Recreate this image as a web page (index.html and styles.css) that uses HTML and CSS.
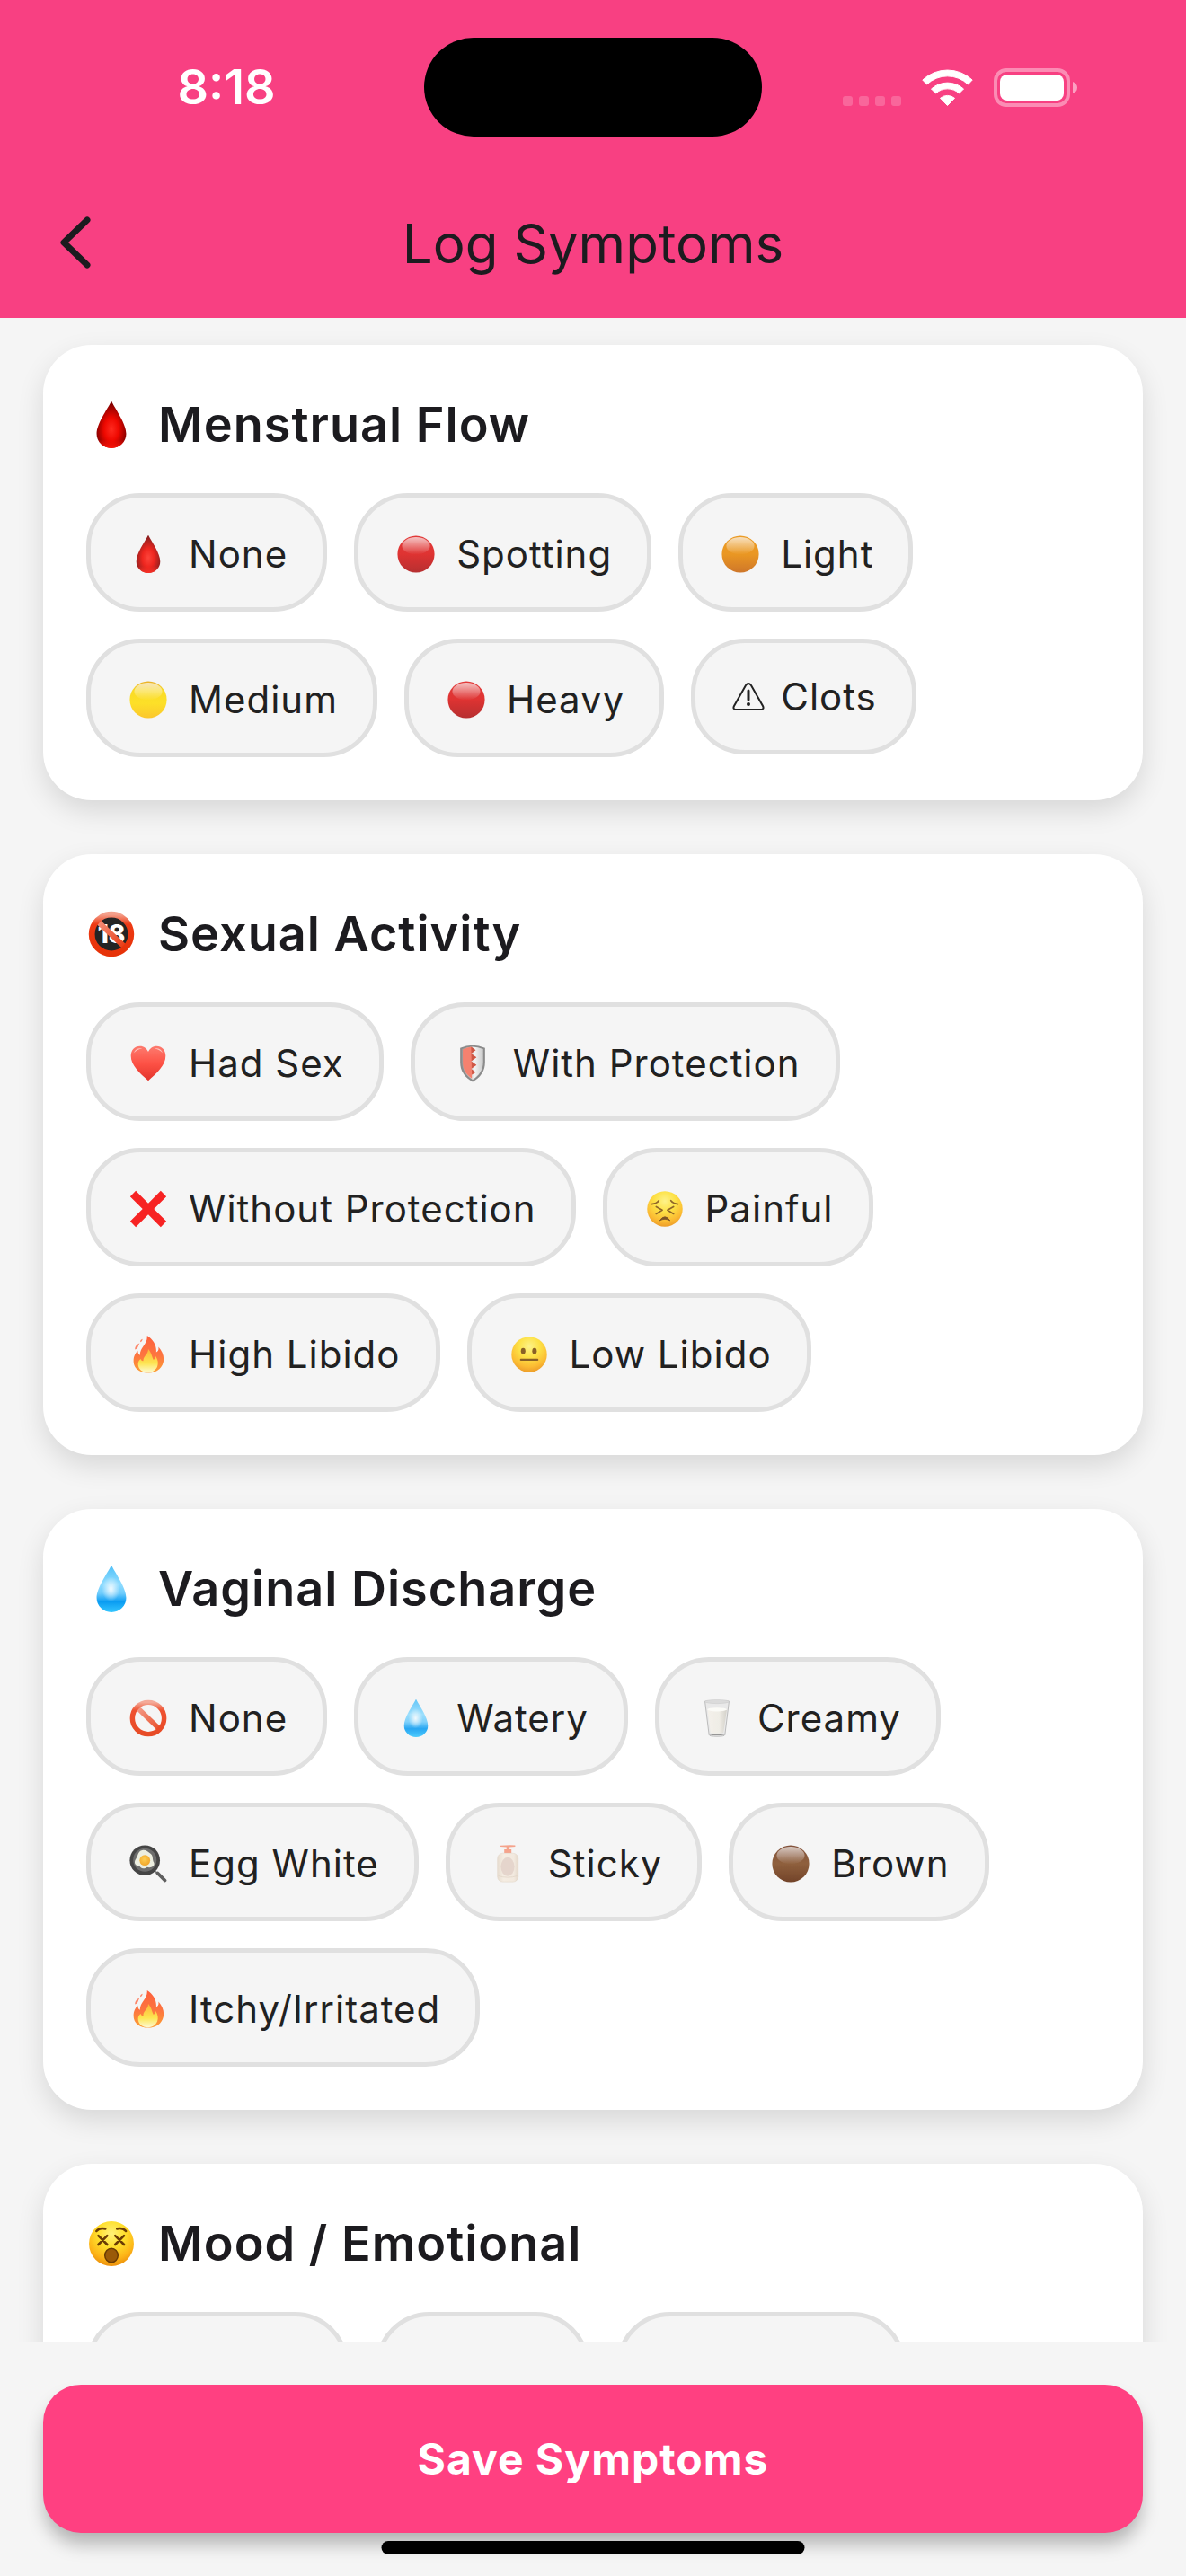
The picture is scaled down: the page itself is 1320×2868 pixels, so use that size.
FILE: index.html
```
<!DOCTYPE html>
<html lang="en">
<head>
  <meta charset="utf-8">
  <meta name="viewport" content="width=device-width, initial-scale=1">
  <title>Log Symptoms</title>
  <link rel="stylesheet" href="styles.css">
</head>
<body>
  <!-- Shared emoji artwork -->
  <svg class="sprite" aria-hidden="true">
    <defs>
      <radialGradient id="g-blood" cx="50%" cy="60%" r="55%">
        <stop offset="0" stop-color="#ff2b20"/><stop offset=".45" stop-color="#ee0800"/><stop offset="1" stop-color="#7c0000"/>
      </radialGradient>
      <linearGradient id="g-bloodbase" x1="0" y1="0" x2="0" y2="1">
        <stop offset=".82" stop-color="#ff1408" stop-opacity="0"/><stop offset="1" stop-color="#ff1408"/>
      </linearGradient>
      <linearGradient id="g-water" x1="0" y1="0" x2="0" y2="1">
        <stop offset="0" stop-color="#4fc0f8"/><stop offset=".4" stop-color="#8fdcff"/><stop offset=".6" stop-color="#6fccfc"/><stop offset=".78" stop-color="#0a9cf2"/><stop offset="1" stop-color="#35c6ff"/>
      </linearGradient>
      <radialGradient id="g-waterlight" cx="50%" cy="50%" r="50%">
        <stop offset="0" stop-color="#fff" stop-opacity=".9"/><stop offset="1" stop-color="#fff" stop-opacity="0"/>
      </radialGradient>
      <linearGradient id="g-red" x1="0" y1="0" x2="0" y2="1">
        <stop offset="0" stop-color="#e0201f"/><stop offset=".5" stop-color="#dc1716"/><stop offset="1" stop-color="#ad1213"/>
      </linearGradient>
      <linearGradient id="g-orange" x1="0" y1="0" x2="0" y2="1">
        <stop offset="0" stop-color="#ea8f08"/><stop offset=".5" stop-color="#e98a04"/><stop offset="1" stop-color="#c9640c"/>
      </linearGradient>
      <linearGradient id="g-yellow" x1="0" y1="0" x2="0" y2="1">
        <stop offset="0" stop-color="#e8a60a"/><stop offset=".25" stop-color="#fbd808"/><stop offset=".6" stop-color="#ffdd0a"/><stop offset="1" stop-color="#fdc010"/>
      </linearGradient>
      <linearGradient id="g-brown" x1="0" y1="0" x2="0" y2="1">
        <stop offset="0" stop-color="#723a20"/><stop offset=".5" stop-color="#804a22"/><stop offset="1" stop-color="#602a0c"/>
      </linearGradient>
      <linearGradient id="g-gloss" x1="0" y1="0" x2="0" y2="1">
        <stop offset="0" stop-color="#fff" stop-opacity=".7"/><stop offset="1" stop-color="#fff" stop-opacity="0"/>
      </linearGradient>
      <linearGradient id="g-ring" x1="0" y1="0" x2="0" y2="1">
        <stop offset="0" stop-color="#f4a08c"/><stop offset=".25" stop-color="#ee3a14"/><stop offset="1" stop-color="#e63208"/>
      </linearGradient>
      <linearGradient id="g-slash" x1="0" y1="0" x2="1" y2="1">
        <stop offset="0" stop-color="#f4917c"/><stop offset="1" stop-color="#e8380f"/>
      </linearGradient>
      <linearGradient id="g-heart" x1="0" y1="0" x2="0" y2="1">
        <stop offset="0" stop-color="#ff6a5c"/><stop offset=".5" stop-color="#ff3a2c"/><stop offset="1" stop-color="#e0180e"/>
      </linearGradient>
      <linearGradient id="g-silver" x1="0" y1="0" x2="1" y2="0">
        <stop offset="0" stop-color="#909090"/><stop offset=".6" stop-color="#f2f2f2"/><stop offset="1" stop-color="#c4c4c4"/>
      </linearGradient>
      <linearGradient id="g-flame" x1="0" y1="0" x2="0" y2="1">
        <stop offset="0" stop-color="#ff4a22"/><stop offset=".55" stop-color="#ff6426"/><stop offset="1" stop-color="#ff9416"/>
      </linearGradient>
      <linearGradient id="g-flamecore" x1="0" y1="0" x2="0" y2="1">
        <stop offset="0" stop-color="#ffab1c"/><stop offset=".6" stop-color="#ffe43a"/><stop offset="1" stop-color="#fffbd0"/>
      </linearGradient>
      <radialGradient id="g-face" cx="50%" cy="28%" r="75%">
        <stop offset="0" stop-color="#fff27a"/><stop offset=".4" stop-color="#ffdf2c"/><stop offset=".75" stop-color="#fdb417"/><stop offset="1" stop-color="#e98a0a"/>
      </radialGradient>
      <linearGradient id="g-milk" x1="0" y1="0" x2="1" y2="0">
        <stop offset="0" stop-color="#f4f1ea"/><stop offset=".6" stop-color="#efece4"/><stop offset="1" stop-color="#cfccc4"/>
      </linearGradient>
      <radialGradient id="g-yolk" cx="45%" cy="40%" r="60%">
        <stop offset="0" stop-color="#ffc93a"/><stop offset="1" stop-color="#f09a0c"/>
      </radialGradient>
      <linearGradient id="g-bottle" x1="0" y1="0" x2="1" y2="0">
        <stop offset="0" stop-color="#e6dacb"/><stop offset=".3" stop-color="#f5ece0"/><stop offset=".8" stop-color="#f2e8dc"/><stop offset="1" stop-color="#e2d4c4"/>
      </linearGradient>
    </defs>

    <symbol id="blood" viewBox="2 1 96 98">
      <path d="M50 0C58 17 81 47 81 69A31 30 0 0 1 19 69C19 47 42 17 50 0Z" fill="url(#g-blood)"/>
      <path d="M50 0C58 17 81 47 81 69A31 30 0 0 1 19 69C19 47 42 17 50 0Z" fill="url(#g-bloodbase)"/>
    </symbol>
    <symbol id="water" viewBox="2 1 96 98">
      <path d="M50 0C58 17 81 47 81 69A31 30 0 0 1 19 69C19 47 42 17 50 0Z" fill="url(#g-water)"/>
      <ellipse cx="49" cy="50" rx="19" ry="26" fill="url(#g-waterlight)"/>
    </symbol>
    <symbol id="gloss" viewBox="0 0 100 100">
      <ellipse cx="50" cy="28" rx="37" ry="23" fill="url(#g-gloss)"/>
    </symbol>
    <symbol id="ball-red" viewBox="0 0 100 100"><circle cx="50" cy="50" r="49" fill="url(#g-red)"/><use href="#gloss"/></symbol>
    <symbol id="ball-orange" viewBox="0 0 100 100"><circle cx="50" cy="50" r="49" fill="url(#g-orange)"/><use href="#gloss"/></symbol>
    <symbol id="ball-yellow" viewBox="0 0 100 100"><circle cx="50" cy="50" r="49" fill="url(#g-yellow)"/><use href="#gloss"/></symbol>
    <symbol id="ball-brown" viewBox="0 0 100 100"><circle cx="50" cy="50" r="49" fill="url(#g-brown)"/><use href="#gloss"/></symbol>
    <symbol id="prohibited" viewBox="0 0 100 100">
      <path d="M21 22L79 78" stroke="url(#g-slash)" stroke-width="13"/>
      <circle cx="50" cy="50" r="42" fill="none" stroke="url(#g-ring)" stroke-width="13"/>
    </symbol>
    <symbol id="heart" viewBox="0 0 100 100">
      <path d="M50 96C28 76 4 56 4 30C4 14 14 4 28 4C38 4 46 10 50 19C54 10 62 4 72 4C86 4 96 14 96 30C96 56 72 76 50 96Z" fill="url(#g-heart)"/>
      <path d="M12 22C15 11 26 8 34 11C26 12 17 16 12 22ZM88 22C85 11 74 8 66 11C74 12 83 16 88 22Z" fill="#fff" opacity=".6"/>
    </symbol>
    <symbol id="shield" viewBox="0 0 100 100">
      <path d="M17 9Q50 -6 83 9V46C83 72 70 87 50 99C30 87 17 72 17 46Z" fill="#7c7c7c"/>
      <path d="M22 12Q50 0 78 12V46C78 68 67 82 50 93C33 82 22 68 22 46Z" fill="url(#g-silver)"/>
      <path d="M24 13Q36 7 46 6L58 15L46 24L60 34L46 44L60 54L46 64L58 73L48 80V90C32 79 24 66 24 46Z" fill="#f5705c"/>
      <path d="M46 6L58 15L46 24L60 34L46 44L60 54L46 64L58 73L48 80Z" fill="#c8402c"/>
    </symbol>
    <symbol id="cross" viewBox="0 0 100 100">
      <path d="M2 17L17 2L50 35L83 2L98 17L65 50L98 83L83 98L50 65L17 98L2 83L35 50Z" fill="#f80404"/>
    </symbol>
    <symbol id="flame" viewBox="0 0 100 100">
      <path d="M47 0C63 10 73 27 71 44C77 42 78 36 77 30C88 42 93 57 90 70C86 88 70 99 50 99C28 99 11 87 11 67C11 54 17 46 22 40C23 46 24 50 28 52C28 30 49 23 47 0Z" fill="url(#g-flame)"/>
      <path d="M15 37C14 30 19 23 27 20C23 27 24 33 15 37ZM29 17C28 13 31 10 35 9C34 13 33 16 29 17Z" fill="#ff7452"/>
      <path d="M50 36C60 48 59 56 64 64C67 62 69 58 69 54C76 64 77 72 74 82C69 93 60 98 49 98C33 98 23 88 23 75C23 69 26 65 30 62C32 67 34 68 37 67C36 55 50 51 50 36Z" fill="url(#g-flamecore)"/>
    </symbol>
    <symbol id="face-pain" viewBox="0 0 100 100">
      <circle cx="50" cy="50" r="47" fill="url(#g-face)"/>
      <path d="M15 37Q28 36 34 28M85 37Q72 36 66 28M27 44L43 53L27 63M73 44L57 53L73 63" fill="none" stroke="#81500a" stroke-width="4" stroke-linecap="round" stroke-linejoin="round"/>
      <path d="M36 81Q50 61 64 81Q50 73 36 81Z" fill="#6e3f06" stroke="#6e3f06" stroke-width="2"/>
    </symbol>
    <symbol id="face-neutral" viewBox="0 0 100 100">
      <circle cx="50" cy="50" r="47" fill="url(#g-face)"/>
      <ellipse cx="34" cy="41" rx="6" ry="8" fill="#7a4b08"/><ellipse cx="64" cy="41" rx="6" ry="8" fill="#7a4b08"/>
      <path d="M28 64H72" stroke="#7a4b08" stroke-width="5" stroke-linecap="round"/>
    </symbol>
    <symbol id="face-dizzy" viewBox="0 0 100 100">
      <circle cx="50" cy="50" r="48" fill="url(#g-face)"/>
      <path d="M18 23Q24 15 37 18M81 23Q75 15 62 18M22 33L41 52M41 33L22 52M58 33L77 52M77 33L58 52" fill="none" stroke="#6b3c04" stroke-width="5" stroke-linecap="round"/>
      <ellipse cx="50" cy="75" rx="14" ry="15" fill="#9a5a08" stroke="#6b3c04" stroke-width="3"/>
    </symbol>
    <symbol id="milk" viewBox="0 0 100 100">
      <path d="M18 5L29 94Q30 98 50 98Q70 98 71 94L82 5Z" fill="#e8e8e8" stroke="#a8a8a8" stroke-width="2"/>
      <path d="M25 28L33 88Q50 92 67 88L76 28Q50 33 25 28Z" fill="url(#g-milk)"/>
      <ellipse cx="50" cy="27" rx="26" ry="5" fill="#fdfcf8"/>
      <ellipse cx="50" cy="6" rx="32" ry="5" fill="#d8d8d8" stroke="#bcbcbc" stroke-width="1"/>
      <path d="M30 92Q50 96 70 92" fill="none" stroke="#888" stroke-width="3"/>
    </symbol>
    <symbol id="pan" viewBox="0 0 100 100">
      <path d="M67 69L75 76" stroke="#777" stroke-width="5"/>
      <path d="M75 75L94 94" stroke="#484848" stroke-width="9" stroke-linecap="round"/>
      <circle cx="41" cy="41" r="40" fill="#2c2c2c"/>
      <circle cx="41" cy="40" r="31" fill="#5a5a5a"/>
      <path d="M34 14C44 12 48 18 56 23C64 29 60 38 65 47C69 57 56 62 47 59C38 66 28 62 27 55C17 57 11 48 16 39C23 31 22 16 34 14Z" fill="#ebeedd"/>
      <circle cx="41" cy="41" r="14" fill="url(#g-yolk)"/>
    </symbol>
    <symbol id="lotion" viewBox="0 0 100 100">
      <path d="M41 22V12H47V6L31 5V2Q50 0 70 1V5L55 6V12H60V22Z" fill="#f5977c"/>
      <rect x="23" y="22" width="55" height="76" rx="14" fill="url(#g-bottle)" stroke="#ddcdbb" stroke-width="1"/>
      <path d="M25 82Q50 90 76 82" fill="none" stroke="#e0d2c2" stroke-width="2"/>
      <ellipse cx="50" cy="58" rx="18" ry="25" fill="#e3d1c7"/>
    </symbol>
    <symbol id="warning" viewBox="0 0 40 34">
      <path d="M17 4Q20 0 23 4L36 27Q38 31 33 31H7Q2 31 4 27Z" fill="none" stroke="#212121" stroke-width="2"/>
      <path d="M20 10V20" stroke="#212121" stroke-width="3" stroke-linecap="round"/>
      <circle cx="20" cy="25" r="2" fill="#212121"/>
    </symbol>
  </svg>

  <div class="screen">
    <header class="header">
      <div class="status">
        <time class="status-time">8:18</time>
        <div class="island"></div>
        <div class="status-icons">
          <svg width="65" height="43" viewBox="0 0 65 43" aria-hidden="true">
            <g fill="#fff" opacity=".2"><rect y="31" width="11" height="11" rx="3"/><rect x="18" y="31" width="11" height="11" rx="3"/><rect x="36" y="31" width="11" height="11" rx="3"/><rect x="54" y="31" width="11" height="11" rx="3"/></g>
          </svg>
          <svg width="57" height="43" viewBox="0 0 57 43" aria-hidden="true">
            <g fill="#fff" stroke="#fff" stroke-width="1" stroke-linejoin="round"><path d="M.8 13A40.5 40.5 0 0 1 56.2 13L51.5 18A33.5 33.5 0 0 0 5.500 18Z"/><path d="M10.500 23A27 27 0 0 1 46.500 23L41.500 28A19 19 0 0 0 15.500 28Z"/><path d="M20.500 33.300A12.500 12.500 0 0 1 36.500 33.300L28.500 41.500Z"/></g>
          </svg>
          <svg width="93" height="43" viewBox="0 0 93 43" aria-hidden="true">
            <rect x="2" y="2" width="81" height="39" rx="12" fill="none" stroke="#fff" stroke-width="4" opacity=".4"/>
            <rect x="7" y="7" width="71" height="29" rx="8" fill="#fff"/>
            <path d="M88 15Q93 17 93 21.500T88 28Z" fill="#fff" opacity=".5"/>
          </svg>
        </div>
      </div>
      <div class="appbar">
        <button class="back" type="button" aria-label="Back">
          <svg width="34" height="58" viewBox="0 0 34 58" fill="none" stroke="#1c1b1f" stroke-width="7" stroke-linecap="round" stroke-linejoin="round" aria-hidden="true"><path d="M30 4L4 29L30 54"/></svg>
        </button>
        <h1 class="appbar-title">Log Symptoms</h1>
      </div>
    </header>

    <main class="content">
      <section class="card">
        <h2 class="card-title"><svg class="title-emoji" aria-hidden="true"><use href="#blood"/></svg>Menstrual Flow</h2>
        <div class="chips">
          <button class="chip" type="button"><svg class="emoji" aria-hidden="true"><use href="#blood"/></svg>None</button>
          <button class="chip" type="button"><svg class="emoji" aria-hidden="true"><use href="#ball-red"/></svg>Spotting</button>
          <button class="chip" type="button"><svg class="emoji" aria-hidden="true"><use href="#ball-orange"/></svg>Light</button>
          <button class="chip" type="button"><svg class="emoji" aria-hidden="true"><use href="#ball-yellow"/></svg>Medium</button>
          <button class="chip" type="button"><svg class="emoji" aria-hidden="true"><use href="#ball-red"/></svg>Heavy</button>
          <button class="chip chip-plain" type="button"><svg class="symbol" aria-hidden="true"><use href="#warning"/></svg>Clots</button>
        </div>
      </section>

      <section class="card">
        <h2 class="card-title">
          <svg class="title-emoji" viewBox="0 0 100 100" aria-hidden="true">
            <circle cx="50" cy="50" r="43" fill="#242424"/>
            <text class="badge-text" x="50" y="69" text-anchor="middle">18</text>
            <path d="M20 22L80 79" stroke="url(#g-slash)" stroke-width="12"/>
            <circle cx="50" cy="50" r="42" fill="none" stroke="url(#g-ring)" stroke-width="13"/>
          </svg>Sexual Activity</h2>
        <div class="chips">
          <button class="chip" type="button"><svg class="emoji" aria-hidden="true"><use href="#heart"/></svg>Had Sex</button>
          <button class="chip" type="button"><svg class="emoji" aria-hidden="true"><use href="#shield"/></svg>With Protection</button>
          <button class="chip" type="button"><svg class="emoji" aria-hidden="true"><use href="#cross"/></svg>Without Protection</button>
          <button class="chip" type="button"><svg class="emoji" aria-hidden="true"><use href="#face-pain"/></svg>Painful</button>
          <button class="chip" type="button"><svg class="emoji" aria-hidden="true"><use href="#flame"/></svg>High Libido</button>
          <button class="chip" type="button"><svg class="emoji" aria-hidden="true"><use href="#face-neutral"/></svg>Low Libido</button>
        </div>
      </section>

      <section class="card">
        <h2 class="card-title"><svg class="title-emoji" aria-hidden="true"><use href="#water"/></svg>Vaginal Discharge</h2>
        <div class="chips">
          <button class="chip" type="button"><svg class="emoji" aria-hidden="true"><use href="#prohibited"/></svg>None</button>
          <button class="chip" type="button"><svg class="emoji" aria-hidden="true"><use href="#water"/></svg>Watery</button>
          <button class="chip" type="button"><svg class="emoji" aria-hidden="true"><use href="#milk"/></svg>Creamy</button>
          <button class="chip" type="button"><svg class="emoji" aria-hidden="true"><use href="#pan"/></svg>Egg White</button>
          <button class="chip" type="button"><svg class="emoji" aria-hidden="true"><use href="#lotion"/></svg>Sticky</button>
          <button class="chip" type="button"><svg class="emoji" aria-hidden="true"><use href="#ball-brown"/></svg>Brown</button>
          <button class="chip" type="button"><svg class="emoji" aria-hidden="true"><use href="#flame"/></svg>Itchy/Irritated</button>
        </div>
      </section>

      <section class="card">
        <h2 class="card-title"><svg class="title-emoji" aria-hidden="true"><use href="#face-dizzy"/></svg>Mood / Emotional</h2>
        <div class="chips">
          <button class="chip chip-medium" type="button" aria-label="Happy"></button>
          <button class="chip chip-small" type="button" aria-label="Sad"></button>
          <button class="chip chip-large" type="button" aria-label="Irritable"></button>
        </div>
      </section>
    </main>

    <footer class="footer">
      <button class="save" type="button">Save Symptoms</button>
      <div class="home-indicator"></div>
    </footer>
  </div>
</body>
</html>
```
FILE: styles.css
```
* {
  box-sizing: border-box;
}

body {
  margin: 0;
  background: #f5f5f5;
  color: #1c1b1f;
  font-family: Inter, "Liberation Sans", sans-serif;
}

button {
  font: inherit;
  letter-spacing: inherit;
  cursor: pointer;
}

.sprite {
  position: absolute;
  width: 0;
  height: 0;
}

.screen {
  display: flex;
  flex-direction: column;
  height: 100vh;
}

/* Header */
.header {
  flex: none;
  background: #f84082;
}

.status {
  display: grid;
  grid-template-columns: 1fr 376px 1fr;
  align-items: center;
  padding: 42px 0 34px;
}

.status-time {
  padding-left: 32px;
  color: #fff;
  font-size: 54px;
  font-weight: 600;
  line-height: 64px;
  text-align: center;
}

.island {
  height: 110px;
  border-radius: 55px;
  background: #000;
}

.status-icons {
  display: flex;
  justify-content: center;
  gap: 23px;
  padding-right: 32px;
}

.appbar {
  display: flex;
  align-items: center;
  height: 168px;
  padding-right: 168px;
}

.back {
  display: flex;
  flex: none;
  align-items: center;
  justify-content: center;
  width: 168px;
  height: 168px;
  padding: 0;
  border: 0;
  background: none;
}

.appbar-title {
  flex: 1;
  margin: 0;
  padding-top: 2px;
  font-size: 60px;
  font-weight: 400;
  line-height: 80px;
  text-align: center;
}

/* Symptom cards */
.content {
  display: flex;
  flex: 1;
  flex-direction: column;
  gap: 60px;
  min-height: 0;
  padding: 30px 48px;
  overflow-y: auto;
  scrollbar-width: none;
}

.card {
  flex: none;
  padding: 48px;
  border-radius: 54px;
  background: #fff;
  box-shadow: 0 12px 30px rgba(0, 0, 0, 0.12);
}

.card-title {
  display: flex;
  align-items: center;
  gap: 24px;
  margin: 0 0 36px;
  font-size: 54px;
  font-weight: 600;
  letter-spacing: 1px;
  line-height: 81px;
}

.title-emoji {
  width: 52px;
  height: 52px;
  margin: 0 2px;
}

.badge-text {
  fill: #fff;
  font-size: 54px;
  font-weight: 800;
  letter-spacing: 0;
}

.chips {
  display: flex;
  flex-wrap: wrap;
  align-items: flex-start;
  gap: 30px;
}

.chip {
  display: flex;
  align-items: center;
  gap: 20px;
  height: 132px;
  padding: 4px 39px 0;
  border: 5px solid #e0e0e0;
  border-radius: 60px;
  background: #f5f5f5;
  color: #212121;
  font-size: 42px;
  letter-spacing: 1px;
  line-height: 52px;
}

.chip-plain {
  gap: 16px;
  height: 129px;
  padding-top: 0;
}

.chip-small {
  width: 238px;
}

.chip-medium {
  width: 292px;
}

.chip-large {
  width: 322px;
}

.emoji {
  width: 42px;
  height: 42px;
  margin: 0 4px;
  opacity: 0.87;
}

.symbol {
  width: 40px;
  height: 34px;
}

/* Save bar */
.footer {
  position: relative;
  flex: none;
  padding: 48px;
}

.save {
  display: block;
  width: 100%;
  height: 165px;
  border: 0;
  border-radius: 42px;
  background: #ff4081;
  box-shadow: 0 14px 20px -2px rgba(0, 0, 0, 0.28);
  color: #fff;
  font-size: 48px;
  font-weight: 700;
  letter-spacing: 1px;
}

.home-indicator {
  position: absolute;
  bottom: 24px;
  left: 50%;
  width: 471px;
  height: 15px;
  border-radius: 8px;
  background: #000;
  transform: translateX(-50%);
}
```
